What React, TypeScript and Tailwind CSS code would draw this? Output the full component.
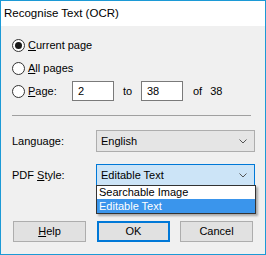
import React from 'react';

const font = { fontFamily: '"Liberation Sans", Arial, sans-serif' };

function Radio({ checked }: { checked?: boolean }) {
  return (
    <span className="flex h-[13px] w-[13px] shrink-0 items-center justify-center rounded-full border border-[#333] bg-white">
      {checked && <span className="h-[7px] w-[7px] rounded-full bg-[#1a1a1a]" />}
    </span>
  );
}

function Chevron() {
  return (
    <svg width="8" height="5" viewBox="0 0 8 5" className="shrink-0">
      <path d="M0.5 0.5 L4 4 L7.5 0.5" fill="none" stroke="#555" strokeWidth="1" />
    </svg>
  );
}

function Button({ children, primary }: { children: React.ReactNode; primary?: boolean }) {
  return (
    <div
      className={`flex h-[21px] w-[73px] items-center justify-center bg-[#e1e1e1] ${
        primary ? 'border-2 border-[#0078d7]' : 'border border-[#adadad]'
      }`}
    >
      {children}
    </div>
  );
}

export default function App() {
  return (
    <div style={font} className="flex h-[255px] w-[266px] flex-col border border-[#1c9ad6] bg-[#f0f0f0] text-[11px] text-black">
      <div className="flex h-[25px] items-center bg-white pl-[3px] text-[11.5px]">Recognise Text (OCR)</div>

      <div className="relative flex flex-1 flex-col pl-[11px] pr-[9px] pt-[9px]">
        <div className="flex h-[20px] items-center gap-[3px]">
          <Radio checked />
          <span><span className="underline">C</span>urrent page</span>
        </div>
        <div className="mt-[3px] flex h-[20px] items-center gap-[3px]">
          <Radio />
          <span><span className="underline">A</span>ll pages</span>
        </div>
        <div className="mt-[3px] flex h-[20px] items-center">
          <Radio />
          <span className="ml-[3px] w-[44px]"><span className="underline">P</span>age:</span>
          <div className="flex h-[20px] w-[42px] items-center border border-[#7a7a7a] bg-white pl-[5px]">2</div>
          <span className="ml-[9px] w-[18px]">to</span>
          <div className="flex h-[20px] w-[42px] items-center border border-[#7a7a7a] bg-white pl-[5px]">38</div>
          <span className="ml-[10px]">of</span>
          <span className="ml-[8px]">38</span>
        </div>

        <div className="mt-[14px] h-px w-[239px] bg-[#a0a0a0]" />

        <div className="mt-[14px] flex h-[22px] items-center">
          <span className="w-[84px]">Language:</span>
          <div className="flex h-[22px] w-[159px] items-center justify-between border border-[#adadad] bg-[#e5e5e5] pl-[4px] pr-[7px]">
            <span>English</span>
            <Chevron />
          </div>
        </div>

        <div className="mt-[12px] flex h-[22px] items-center">
          <span className="w-[84px]">PDF <span className="underline">S</span>tyle:</span>
          <div className="flex h-[22px] w-[159px] items-center justify-between border border-[#0078d7] bg-[#cce4f7] pl-[4px] pr-[7px]">
            <span>Editable Text</span>
            <Chevron />
          </div>
        </div>

        <div className="absolute left-[95px] top-[159px] w-[160px] border border-[#333] bg-white shadow-[2px_2px_2px_rgba(0,0,0,0.3)]">
          <div className="flex h-[13px] items-center pl-[2px]">Searchable Image</div>
          <div className="flex h-[14px] items-center bg-[#3a95ec] pl-[2px] text-white">Editable Text</div>
        </div>

        <div className="mt-[35px] flex items-center pl-[1px]">
          <Button><span><span className="underline">H</span>elp</span></Button>
          <div className="ml-[11px]">
            <Button primary>OK</Button>
          </div>
          <div className="ml-[10px]">
            <Button>Cancel</Button>
          </div>
        </div>
      </div>
    </div>
  );
}
